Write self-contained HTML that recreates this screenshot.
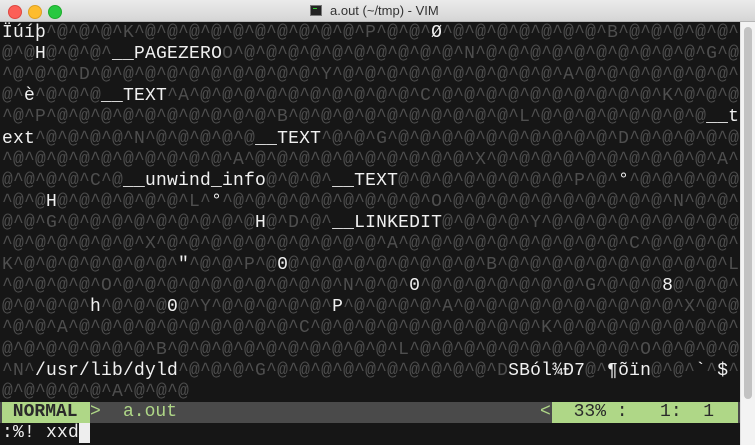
<!DOCTYPE html>
<html><head><meta charset="utf-8"><style>
html,body{margin:0;padding:0;width:755px;height:445px;overflow:hidden;background:#161616;}
#title{position:absolute;left:0;top:0;width:755px;height:22px;background:linear-gradient(#ebebeb,#d5d5d5);border-bottom:1px solid #b5b5b5;box-sizing:border-box;font-family:"Liberation Sans",sans-serif;font-size:13px;color:#333;}
.tl{position:absolute;top:5px;width:12px;height:12px;border-radius:50%;}
#title .t{position:absolute;left:330px;top:3px;}
#term{position:absolute;left:0;top:22px;width:740px;height:423px;background:#161616;}
.row{position:absolute;left:2px;height:21px;line-height:21px;white-space:pre;font-family:"Liberation Mono",monospace;font-size:18px;letter-spacing:0.2px;color:#4e4e4e;}
.w{color:#f0f0f0;}
#sb{position:absolute;left:740px;top:22px;width:15px;height:423px;background:#f3f3f3;border-left:1px solid #e0e0e0;box-sizing:border-box;}
#thumb{position:absolute;left:3px;top:5px;width:8px;height:372px;border-radius:4px;background:#c2c2c2;}
#status{position:absolute;left:0;top:402px;width:740px;height:21px;background:#4a4a4a;font-family:"Liberation Mono",monospace;font-size:18px;line-height:21px;white-space:pre;}
</style></head><body>
<div id="title">
<div class="tl" style="left:8px;background:#fc5f57;border:0.5px solid #de4740"></div>
<div class="tl" style="left:28px;background:#fdbc2e;border:0.5px solid #dea123"></div>
<div class="tl" style="left:48px;background:#28c840;border:0.5px solid #1dab2c"></div>
<div style="position:absolute;left:310px;top:5px;width:12px;height:11px;background:#222;border:1px solid #777;box-sizing:border-box"><div style="position:absolute;left:2px;top:2px;width:4px;height:1px;background:#3c3"></div></div>
<span class="t">a.out (~/tmp) - VIM</span>
</div>
<div id="term"></div>
<div id="sb"><div id="thumb"></div></div>
<div id="status"><span style="position:absolute;left:2px;top:0;width:88px;height:21px;background:#afd787;color:#2a2a2a;font-weight:bold;"> NORMAL</span><span style="position:absolute;left:90px;color:#afd787;">&gt;</span><span style="position:absolute;left:123px;color:#afd787;">a.out</span><span style="position:absolute;left:540px;color:#afd787;">&lt;</span><span style="position:absolute;left:552px;top:0;width:186px;height:21px;background:#afd787;color:#2a2a2a;">  33% :   1:  1</span></div>
<div class="row" style="top:423px;color:#f0f0f0;left:2px">:%! xxd<span style="background:#eee;color:#000"> </span></div>
<script>
var spec=[
[[0,"Ïúíþ"],[39,"Ø"]],
[[3,"H"],[10,"__PAGEZERO"]],
[],
[[2,"è"],[9,"__TEXT"]],
[[64,"__t"]],
[[0,"ext"],[23,"__TEXT"]],
[],
[[11,"__unwind_info"],[30,"__TEXT"],[56,"°"]],
[[4,"H"],[19,"°"]],
[[23,"H"],[30,"__LINKEDIT"]],
[],
[[16,'"'],[25,"0"]],
[[37,"0"],[60,"8"]],
[[8,"h"],[15,"0"],[30,"P"]],
[],[],
[[3,"/usr/lib/dyld"],[46,"SBól¾Ð7"],[55,"¶õïn"],[63,"`"],[65,"$"]],
[]
];
var extra="GACBNYAPODXKL";
var h="";
for(var r=0;r<18;r++){
 var n=67, line=[];
 var lim=(r==17)?17:n;
 for(var c=0;c<n;c++){
  var ch;
  if(c>=lim) ch=" ";
  else if((c+r)%2==0) ch="^";
  else ch=((c*7+r*3)%11==0)?extra[(c+r)%extra.length]:"@";
  line.push([ch,0]);
 }
 spec[r].forEach(function(t){for(var i=0;i<t[1].length&&t[0]+i<n;i++){line[t[0]+i]=[t[1][i],1];}});
 var s="",cur=-1;
 line.forEach(function(p){if(p[1]!=cur){if(cur!=-1)s+="</span>";s+=p[1]?'<span class="w">':'<span>';cur=p[1];}s+=p[0].replace("&","&amp;").replace("<","&lt;");});
 s+="</span>";
 h+='<div class="row" style="top:'+(1+r*21.1).toFixed(1)+'px">'+s+'</div>';
}
document.getElementById("term").innerHTML=h;
</script>
</body></html>
